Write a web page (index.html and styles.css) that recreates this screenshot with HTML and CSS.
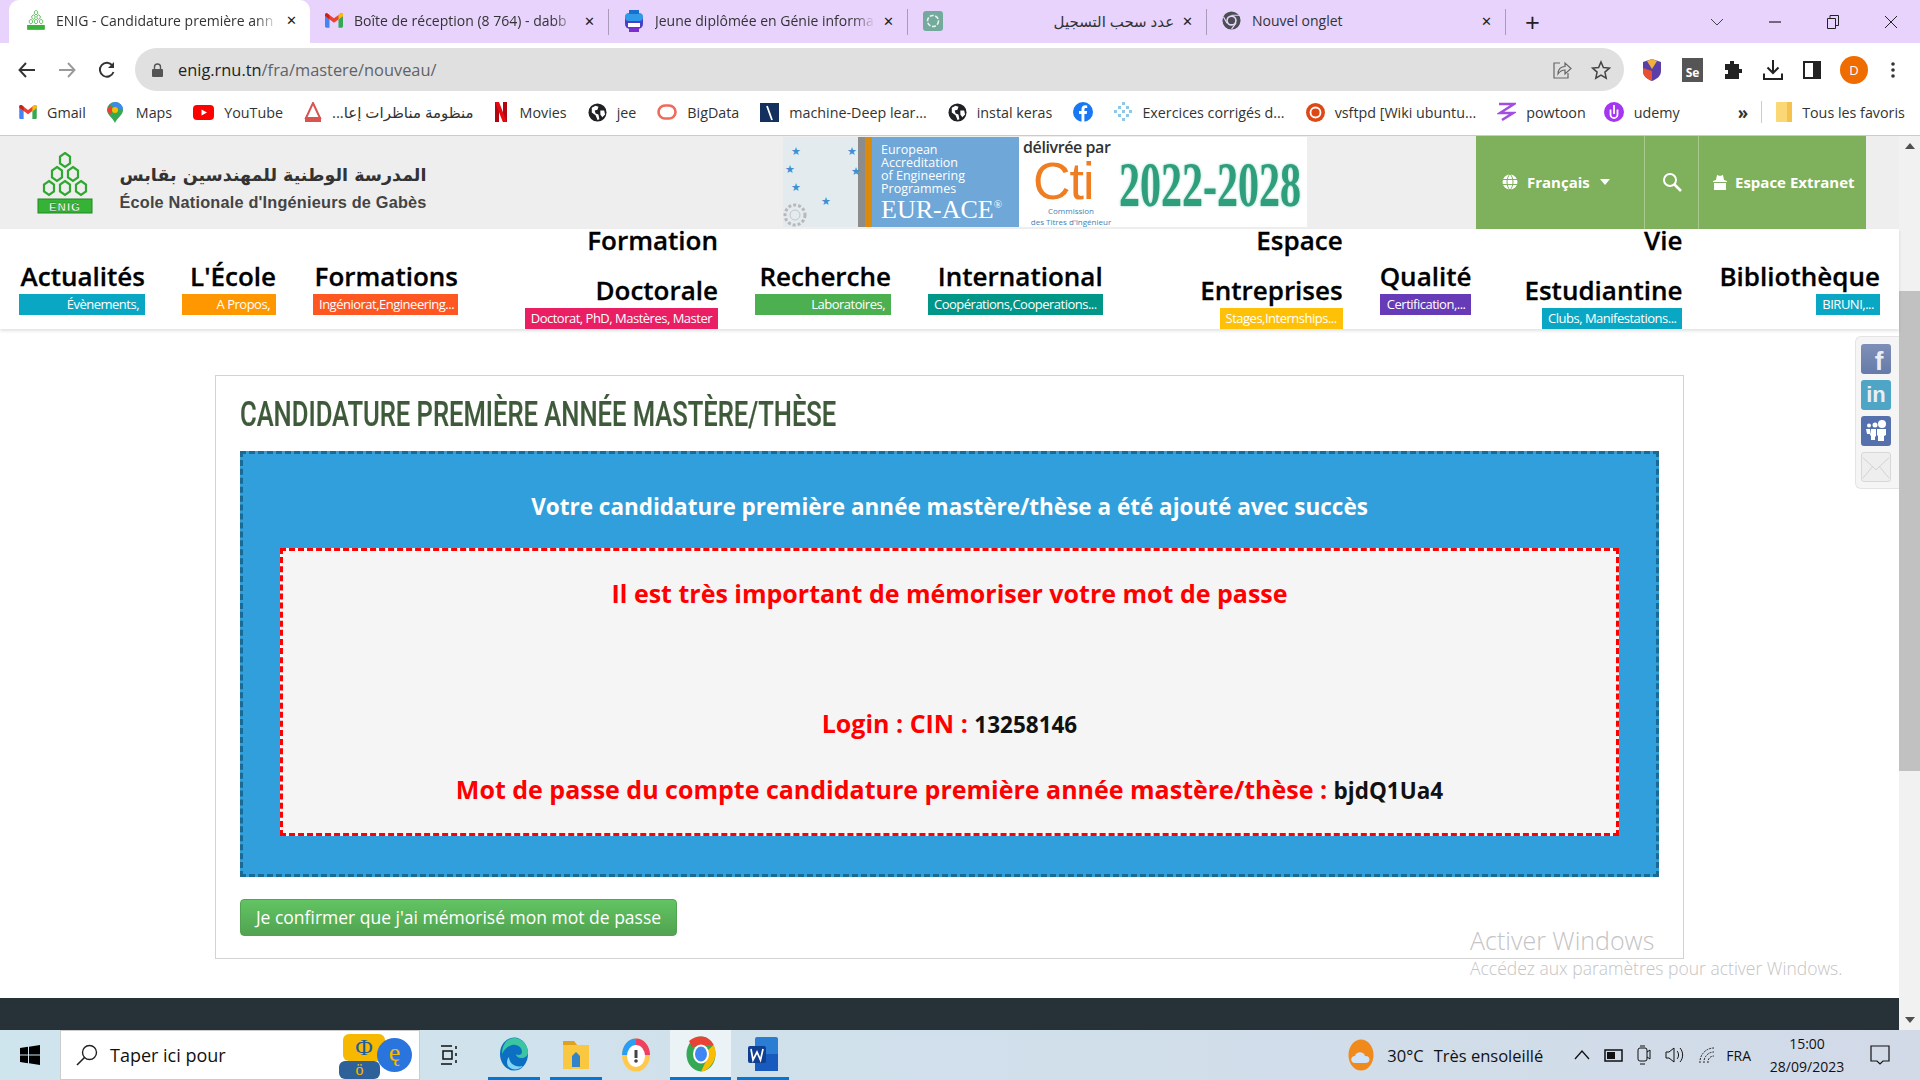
FILE: index.html
```html
<!DOCTYPE html>
<html lang="fr">
<head>
  <meta charset="UTF-8">
  <title>ENIG - Candidature première année mastère/thèse</title>
  <link rel="stylesheet" href="styles.css">
</head>
<body>
  <svg class="defs" width="0" height="0">
    <symbol id="gmail" viewBox="0 0 20 16">
      <path fill="#4285f4" d="M0 3v11.500c0 .8.700 1.500 1.500 1.500H5V7z"/>
      <path fill="#34a853" d="M15 7v9h3.500c.8 0 1.500-.7 1.500-1.500V3z"/>
      <path fill="#ea4335" d="M0 3l10 7.500L20 3v-1C20 .2 18.300-.5 17 .4L10 5.600 3 .4C1.700-.5 0 .2 0 2z"/>
      <path fill="#fbbc04" d="M15 7l5-4v-1c0-1.800-1.700-2.500-3-1.600L15 2z"/>
      <path fill="#c5221f" d="M0 3l5 4V2L3 .4C1.700-.5 0 .2 0 2z"/>
    </symbol>
    <symbol id="globe" viewBox="0 0 20 20">
      <circle cx="10" cy="10" r="9.500" fill="#202124"/>
      <path fill="#fff" d="M4 5l4-2 3 1-1 3-3 1 1 3 3 1 1 5-2 1-2-5-4-3zM13 8l4 0 1 4-3 3-2-3z"/>
    </symbol>
    <symbol id="enig" viewBox="0 0 56 62">
      <g fill="none" stroke="#2fa82f" stroke-width="2.200">
        <path d="M28 1l5 3.500v7L28 15l-5-3.500v-7z"/>
        <path d="M20 15l5 3.500v7L20 29l-5-3.500v-7z"/>
        <path d="M36 15l5 3.500v7L36 29l-5-3.500v-7z"/>
        <path d="M12 29l5 3.500v7L12 43l-5-3.500v-7z"/>
        <path d="M28 29l5 3.500v7L28 43l-5-3.500v-7z"/>
        <path d="M44 29l5 3.500v7L44 43l-5-3.500v-7z"/>
      </g>
      <rect x="1" y="47" width="54" height="14" fill="#36b336" stroke="#1d8a1d"/>
    </symbol>
  </svg>

  <div class="tabstrip">
    <div class="tab tab-active">
      <svg class="fav" width="18" height="20"><use href="#enig"/></svg>
      <span class="tab-title">ENIG - Candidature première ann</span>
      <span class="tab-close">✕</span>
    </div>
    <div class="tab">
      <svg class="fav" width="18" height="15"><use href="#gmail"/></svg>
      <span class="tab-title">Boîte de réception (8 764) - dabb</span>
      <span class="tab-close">✕</span>
    </div>
    <div class="tab">
      <svg class="fav" width="20" height="22" viewBox="0 0 20 22">
        <rect x="1" y="3" width="18" height="16" rx="5" fill="#4a3fc9"/>
        <rect x="1" y="3" width="18" height="8" rx="4" fill="#2f9be8"/>
        <rect x="5" y="0" width="10" height="4" fill="#1c6dd0"/>
        <rect x="5" y="18" width="10" height="4" fill="#7a2fd0"/>
        <rect x="4" y="13" width="12" height="4" fill="#fff"/>
      </svg>
      <span class="tab-title">Jeune diplômée en Génie informa</span>
      <span class="tab-close">✕</span>
    </div>
    <div class="tab">
      <svg class="fav" width="20" height="20" viewBox="0 0 20 20">
        <rect width="20" height="20" rx="3" fill="#74aa9c"/>
        <circle cx="10" cy="10" r="5.500" fill="none" stroke="#e6f2ef" stroke-width="1.600" stroke-dasharray="4 1.500"/>
      </svg>
      <span class="tab-title tab-rtl" dir="rtl">عدد سحب التسجيل</span>
      <span class="tab-close">✕</span>
    </div>
    <div class="tab tab-last">
      <svg class="fav" width="19" height="19" viewBox="0 0 20 20">
        <circle cx="10" cy="10" r="9.500" fill="#4a4d52"/>
        <circle cx="10" cy="10" r="5.500" fill="#e8d3fd"/>
        <circle cx="10" cy="10" r="3.800" fill="#4a4d52"/>
        <path d="M10 4.500h8.500M5.200 12.800L1.500 6M14.800 12.800L10 19" stroke="#e8d3fd" stroke-width="1.200"/>
      </svg>
      <span class="tab-title">Nouvel onglet</span>
      <span class="tab-close">✕</span>
    </div>
    <span class="new-tab">+</span>
    <div class="win-controls">
      <svg width="14" height="8" viewBox="0 0 14 8"><path d="M1 1l6 6 6-6" fill="none" stroke="#444"/></svg>
      <svg width="14" height="2" viewBox="0 0 14 2"><path d="M1 1h12" stroke="#222" stroke-width="1.200"/></svg>
      <svg width="14" height="14" viewBox="0 0 14 14"><path d="M1.500 3.500h8v10h-8zM4 3.500V.5h8.500v10H9.500" fill="none" stroke="#222"/></svg>
      <svg width="14" height="14" viewBox="0 0 14 14"><path d="M1 1l12 12M13 1L1 13" stroke="#222"/></svg>
    </div>
  </div>

  <div class="toolbar">
    <svg class="nav-ic" width="18" height="16" viewBox="0 0 18 16"><path d="M17 8H2M8 1L1.500 8 8 15" fill="none" stroke="#333" stroke-width="1.900"/></svg>
    <svg class="nav-ic" width="18" height="16" viewBox="0 0 18 16"><path d="M1 8h15M10 1l6.500 7L10 15" fill="none" stroke="#9a9a9a" stroke-width="1.900"/></svg>
    <svg class="nav-ic" width="18" height="18" viewBox="0 0 18 18"><path d="M15.500 11a7 7 0 1 1-1-6.500" fill="none" stroke="#333" stroke-width="1.900"/><path d="M16 1v6h-6z" fill="#333"/></svg>
    <div class="omnibox">
      <svg width="11" height="14" viewBox="0 0 11 14"><path d="M2.500 6V4a3 3 0 0 1 6 0v2" fill="none" stroke="#555" stroke-width="1.400"/><rect y="6" width="11" height="8" rx="1" fill="#555"/></svg>
      <span class="url"><b>enig.rnu.tn</b>/fra/mastere/nouveau/</span>
      <svg class="omni-share" width="20" height="20" viewBox="0 0 20 20"><path d="M8 3H2v15h14v-5" fill="none" stroke="#666" stroke-width="1.200"/><path d="M6 14c0-5 3-7.500 7-7.500V3l6 5.500-6 5.500v-4c-3 0-5 1-7 4z" fill="none" stroke="#666" stroke-width="1.200"/></svg>
      <svg width="20" height="20" viewBox="0 0 20 20"><path d="M10 2l2.400 5.500 6 .6-4.500 4 1.300 6L10 15l-5.200 3.100 1.300-6-4.500-4 6-.6z" fill="none" stroke="#444" stroke-width="1.500"/></svg>
    </div>
    <div class="ext-icons">
      <svg width="20" height="24" viewBox="0 0 20 24"><path d="M10 1l9 3v9c0 5-4 8-9 10-5-2-9-5-9-10V4z" fill="#5b3fa8"/><path d="M1 10l9 3v10c-5-2-9-5-9-10z" fill="#e8502f"/><path d="M10 1l5 2-5 8-5-8z" fill="#f3b13a"/></svg>
      <span class="ext-se">Se</span>
      <svg width="20" height="20" viewBox="0 0 20 20"><path fill="#222" d="M7 1h4v3h5v5h3v4h-3v6H2v-5h3v-4H2V4h5z"/></svg>
      <svg width="20" height="20" viewBox="0 0 20 20"><path d="M10 0v12M4.500 7.500L10 13l5.500-5.500M1 13.500V19h18v-5.500" fill="none" stroke="#222" stroke-width="2"/></svg>
      <svg width="18" height="18" viewBox="0 0 18 18"><rect x="1" y="1" width="16" height="16" fill="none" stroke="#222" stroke-width="2"/><rect x="10" y="1" width="7" height="16" fill="#222"/></svg>
      <span class="avatar">D</span>
      <svg class="ext-dots" width="4" height="16" viewBox="0 0 4 16"><circle cx="2" cy="2" r="1.800" fill="#333"/><circle cx="2" cy="8" r="1.800" fill="#333"/><circle cx="2" cy="14" r="1.800" fill="#333"/></svg>
    </div>
  </div>

  <div class="bookmarks">
    <span class="bm"><svg width="18" height="14"><use href="#gmail"/></svg>Gmail</span>
    <span class="bm bm-wide"><svg width="16" height="21" viewBox="0 0 16 21"><path d="M8 0a8 8 0 0 1 8 8c0 5-6 8-8 13C6 16 0 13 0 8a8 8 0 0 1 8-8z" fill="#34a853"/><path d="M8 0a8 8 0 0 1 8 8L3 3a8 8 0 0 1 5-3z" fill="#4285f4"/><path d="M3 3L0 8l3 5 3-5z" fill="#ea4335"/><circle cx="8" cy="8" r="3" fill="#fbbc04"/></svg>Maps</span>
    <span class="bm"><svg width="21" height="15" viewBox="0 0 21 15"><rect width="21" height="15" rx="4" fill="#f00"/><path d="M8.500 4.500l5.500 3-5.500 3z" fill="#fff"/></svg>YouTube</span>
    <span class="bm bm-ar"><svg width="18" height="20" viewBox="0 0 18 20"><path d="M9 1l7 15H2z" fill="none" stroke="#d9534f" stroke-width="2"/><rect x="1" y="15" width="16" height="5" fill="#d9534f"/></svg><span dir="rtl">منظومة مناظرات إعا...</span></span>
    <span class="bm bm-wide"><svg width="12" height="20" viewBox="0 0 12 20"><path d="M0 0h4v20l-4 .5z" fill="#b1060f"/><path d="M8 0h4v20.500L8 20z" fill="#b1060f"/><path d="M0 0h4l8 20.500H8z" fill="#e50914"/></svg>Movies</span>
    <span class="bm"><svg width="19" height="19"><use href="#globe"/></svg>jee</span>
    <span class="bm"><svg width="20" height="16" viewBox="0 0 20 16"><rect x="1.500" y="1.500" width="17" height="13" rx="6.500" fill="none" stroke="#ef6a5a" stroke-width="2.600"/></svg>BigData</span>
    <span class="bm"><svg width="19" height="19" viewBox="0 0 19 19"><rect width="19" height="19" fill="#14305f"/><path d="M7 3l5 14" stroke="#fff" stroke-width="1.800"/></svg>machine-Deep lear...</span>
    <span class="bm"><svg width="19" height="19"><use href="#globe"/></svg>instal keras</span>
    <span class="bm"><svg width="20" height="20" viewBox="0 0 20 20"><circle cx="10" cy="10" r="10" fill="#1877f2"/><path d="M8.500 20v-8H6V9h2.500V7c0-2.500 1.500-3.800 3.700-3.800l2 .2v2.500h-1.300c-1.200 0-1.500.7-1.500 1.500V9h2.700l-.4 3h-2.300v8z" fill="#fff"/></svg></span>
    <span class="bm"><svg width="18" height="20" viewBox="0 0 18 20"><g fill="#8fc7e8"><rect x="8" y="0" width="3" height="3"/><rect x="4" y="4" width="3" height="3"/><rect x="12" y="4" width="3" height="3"/><rect x="0" y="8" width="3" height="3"/><rect x="8" y="8" width="3" height="3"/><rect x="15" y="8" width="3" height="3"/><rect x="4" y="12" width="3" height="3"/><rect x="12" y="12" width="3" height="3"/><rect x="8" y="16" width="3" height="3"/></g></svg>Exercices corrigés d...</span>
    <span class="bm"><svg width="19" height="19" viewBox="0 0 19 19"><circle cx="9.500" cy="9.500" r="9.500" fill="#dd4814"/><circle cx="9.500" cy="9.500" r="5" fill="none" stroke="#fff" stroke-width="1.800"/></svg>vsftpd [Wiki ubuntu...</span>
    <span class="bm"><svg width="19" height="20" viewBox="0 0 19 20"><path d="M2 2h15L3 11h13L5 18" fill="none" stroke="#a04fe0" stroke-width="2.600"/></svg>powtoon</span>
    <span class="bm bm-udemy"><svg width="20" height="20" viewBox="0 0 20 20"><circle cx="10" cy="10" r="10" fill="#a435f0"/><path d="M6.500 7.500v5a3.500 3.500 0 0 0 7 0v-5M10 3v9" fill="none" stroke="#fff" stroke-width="1.800"/></svg>udemy</span>
    <span class="bm-more">»</span>
    <span class="bm-sep"></span>
    <span class="bm bm-all"><svg width="16" height="20" viewBox="0 0 16 20"><rect width="16" height="20" rx="1" fill="#fbd775"/><path d="M11 0h5v20h-5z" fill="#f4c24d"/></svg>Tous les favoris</span>
  </div>

  <div class="viewport">
    <div class="page">
      <header class="site-header">
        <div class="brand">
          <svg class="brand-logo" width="56" height="62" viewBox="0 0 56 62">
            <use href="#enig" width="56" height="62"/>
            <text x="28" y="58.500" font-family="Liberation Sans" font-size="11.500" font-weight="700" fill="#fff" stroke="#0c5c0c" stroke-width=".3" text-anchor="middle" letter-spacing="1">ENIG</text>
          </svg>
          <div class="brand-names">
            <div class="brand-ar" dir="rtl">المدرسة الوطنية للمهندسين بقابس</div>
            <div class="brand-fr">École Nationale d'Ingénieurs de Gabès</div>
          </div>
        </div>
        <div class="accred">
          <div class="accred-stars">
            <span class="star s1">★</span><span class="star s2">★</span><span class="star s3">★</span>
            <span class="star s4">★</span><span class="star s5">★</span><span class="star s6">★</span>
            <svg class="accred-gear" width="34" height="34" viewBox="0 0 34 34"><circle cx="12" cy="22" r="10" fill="none" stroke="#b8b8b8" stroke-width="3" stroke-dasharray="3 2"/><circle cx="12" cy="22" r="5" fill="none" stroke="#c4c4c4"/></svg>
          </div>
          <div class="accred-blue">
            <div class="accred-lines">European<br>Accreditation<br>of Engineering<br>Programmes</div>
            <div class="accred-eur">EUR-ACE<sup>®</sup></div>
          </div>
          <div class="accred-cti">
            <div class="cti-by">délivrée par</div>
            <div class="cti-logo">Cti</div>
            <div class="cti-sub">Commission<br>des Titres d'Ingénieur</div>
          </div>
          <div class="accred-years"><span>2022-2028</span></div>
        </div>
        <div class="header-actions">
          <div class="act act-lang">
            <svg width="16" height="16" viewBox="0 0 16 16"><circle cx="8" cy="8" r="7.500" fill="#fff"/><path d="M0 5.500h16M0 10.500h16M8 0c-4 4-4 12 0 16M8 0c4 4 4 12 0 16" fill="none" stroke="#7fb05b"/></svg>
            <span>Français</span>
            <span class="caret"></span>
          </div>
          <div class="act act-search">
            <svg width="20" height="20" viewBox="0 0 20 20"><circle cx="8" cy="8" r="6" fill="none" stroke="#fff" stroke-width="2"/><path d="M12.500 12.500L19 19" stroke="#fff" stroke-width="2.600"/></svg>
          </div>
          <div class="act act-extra">
            <svg width="14" height="16" viewBox="0 0 14 16"><path fill="#fff" d="M3 6l1-5 3 1 3-1 1 5 3 1v1H0V7zM1 9h12v7H1z"/></svg>
            <span>Espace Extranet</span>
          </div>
        </div>
      </header>

      <nav class="main-nav">
        <div class="nav-item nav-act"><div class="nav-title">Actualités</div><div class="nav-label c-cyan">Évènements,</div></div>
        <div class="nav-item nav-ecole"><div class="nav-title">L'École</div><div class="nav-label c-orange">A Propos,</div></div>
        <div class="nav-item nav-form"><div class="nav-title">Formations</div><div class="nav-label c-deep">Ingéniorat,Engineering...</div></div>
        <div class="nav-item nav-tall nav-doc"><div class="nav-title">Formation<br>Doctorale</div><div class="nav-label c-pink">Doctorat, PhD, Mastères, Master</div></div>
        <div class="nav-item nav-rech"><div class="nav-title">Recherche</div><div class="nav-label c-green">Laboratoires,</div></div>
        <div class="nav-item"><div class="nav-title">International</div><div class="nav-label c-teal">Coopérations,Cooperations...</div></div>
        <div class="nav-item nav-tall nav-esp"><div class="nav-title">Espace<br>Entreprises</div><div class="nav-label c-amber">Stages,Internships...</div></div>
        <div class="nav-item"><div class="nav-title">Qualité</div><div class="nav-label c-purple">Certification,...</div></div>
        <div class="nav-item nav-tall nav-vie"><div class="nav-title">Vie<br>Estudiantine</div><div class="nav-label c-cyan">Clubs, Manifestations...</div></div>
        <div class="nav-item nav-lib"><div class="nav-title">Bibliothèque</div><div class="nav-label c-cyan">BIRUNI,...</div></div>
      </nav>

      <main class="panel">
        <h1 class="panel-title">CANDIDATURE PREMIÈRE ANNÉE MASTÈRE/THÈSE</h1>
        <div class="notice">
          <p class="notice-head">Votre candidature première année mastère/thèse a été ajouté avec succès</p>
          <div class="creds">
            <p class="creds-warn">Il est très important de mémoriser votre mot de passe</p>
            <p class="creds-login">Login : CIN : <b>13258146</b></p>
            <p class="creds-pass">Mot de passe du compte candidature première année mastère/thèse : <b>bjdQ1Ua4</b></p>
          </div>
        </div>
        <button class="confirm-btn">Je confirmer que j'ai mémorisé mon mot de passe</button>
      </main>

      <footer class="site-footer"></footer>

      <div class="social">
        <span class="soc soc-fb">f</span>
        <span class="soc soc-in">in</span>
        <span class="soc soc-ms">
          <svg width="24" height="22" viewBox="0 0 24 22"><g fill="#fff"><circle cx="18" cy="4" r="4"/><circle cx="11" cy="5" r="2.500"/><circle cx="5" cy="5.500" r="2"/><path d="M13 9h9v6l-2 1v5h-6v-5l-1-1zM7 9h5v7l-1 1v3H7v-4l-1-1zM2 9h4v5H3z"/></g></svg>
        </span>
        <span class="soc soc-mail">
          <svg width="30" height="30" viewBox="0 0 30 30"><path d="M1 5l14 13L29 5M1 27l10-12M29 27L19 15" fill="none" stroke="#d0d0d0"/></svg>
        </span>
      </div>

      <div class="activate">
        <div class="activate-a">Activer Windows</div>
        <div class="activate-b">Accédez aux paramètres pour activer Windows.</div>
      </div>
    </div>

    <div class="scrollbar">
      <span class="sb-up"></span>
      <span class="sb-thumb"></span>
      <span class="sb-down"></span>
    </div>
  </div>

  <div class="taskbar">
    <svg class="start" width="20" height="20" viewBox="0 0 20 20"><path fill="#000" d="M0 3l8-1.200V9.500H0zM9 1.700L20 0v9.500H9zM0 10.500h8v7.700L0 17zM9 10.500h11V20L9 18.300z"/></svg>
    <div class="search-box">
      <svg width="22" height="22" viewBox="0 0 22 22"><circle cx="13.500" cy="8.500" r="7" fill="none" stroke="#222" stroke-width="1.400"/><path d="M8.500 13.500L1 21" stroke="#222" stroke-width="1.600"/></svg>
      <span>Taper ici pour</span>
      <span class="bubbles">
        <span class="bub bub-a">Φ</span>
        <span class="bub bub-b">ę</span>
        <span class="bub bub-c">ö</span>
      </span>
    </div>
    <svg class="task-view" width="20" height="20" viewBox="0 0 20 20"><path d="M1 1h11M1 19h11M3 6h9v8H3zM16 1v3M16 8v3M16 15v3" fill="none" stroke="#111" stroke-width="1.500"/></svg>
    <span class="tile tile-on">
      <svg width="30" height="34" viewBox="0 0 30 34"><ellipse cx="15" cy="17" rx="14" ry="16.500" fill="#0c6fc2"/><path d="M15 1c8 0 14 7 14 14 0 4-3 6-7 6-3 0-5-2-5-4 2 2 6 1 6-2 0-5-5-8-10-7C9 9 5 12 3 17 3 8 8 1 15 1z" fill="#39c6a0"/><path d="M10 20c0 6 6 11 14 9-3 3-7 4-11 3-6-2-6-9-3-12z" fill="#7fd3f5"/></svg>
    </span>
    <span class="tile tile-on">
      <svg width="28" height="30" viewBox="0 0 28 30"><path d="M1 2h11l3 4h12v24H1z" fill="#f9c840"/><path d="M1 2h11l3 4H1z" fill="#e0a020"/><path d="M10 28V17l4-4 4 4v11z" fill="#3383c9"/></svg>
    </span>
    <span class="tile tile-brave">
      <svg width="30" height="34" viewBox="0 0 30 34"><ellipse cx="15" cy="17" rx="14" ry="16.500" fill="#ffc94d"/><path d="M15 .5C23 .5 29 8 29 17H15z" fill="#ee4060"/><path d="M1 17C1 8 7 .5 15 .5V17z" fill="#2a9df4"/><ellipse cx="15" cy="18" rx="9" ry="11" fill="#fff"/><rect x="13.500" y="12" width="3" height="8" fill="#444"/><circle cx="15" cy="23" r="1.800" fill="#444"/></svg>
    </span>
    <span class="tile tile-on tile-active">
      <svg width="30" height="36" viewBox="0 0 30 36"><ellipse cx="15" cy="18" rx="14.500" ry="17.500" fill="#34a853"/><path d="M15 .5c5.500 0 10 3 12.700 8.500H15l-9 2-3-6C6 2.500 10 .5 15 .5z" fill="#ea4335"/><path d="M27.700 9c2.500 5.500 2.200 13-1 18S19 35.500 15 35.500L21 23l1-9z" fill="#fbbc04"/><ellipse cx="15" cy="18" rx="8" ry="9.500" fill="#fff"/><ellipse cx="15" cy="18" rx="6" ry="7.500" fill="#4285f4"/></svg>
    </span>
    <span class="tile tile-on tile-word">
      <svg width="30" height="34" viewBox="0 0 30 34"><rect x="7" y="0" width="23" height="34" rx="2" fill="#2b7cd3"/><rect x="7" y="17" width="23" height="17" fill="#185abd"/><rect x="0" y="9" width="18" height="17" rx="2" fill="#103f91"/><path d="M3 12l2 11 4-8 3.500 8L15 12" fill="none" stroke="#fff" stroke-width="1.700"/></svg>
    </span>

    <div class="tray">
      <svg width="26" height="32" viewBox="0 0 26 32"><ellipse cx="13" cy="16" rx="12.500" ry="15.500" fill="#f08a1d"/><path d="M7 24c-5 0-5-7 0-7 1-5 9-5 10 0 5-1 7 7 0 7z" fill="#cfe3fa"/></svg>
      <span class="tray-temp">30°C</span>
      <span class="tray-sky">Très ensoleillé</span>
      <svg class="tray-up" width="16" height="10" viewBox="0 0 16 10"><path d="M1 9l7-8 7 8" fill="none" stroke="#111" stroke-width="1.300"/></svg>
      <svg width="19" height="13" viewBox="0 0 19 13"><rect x="1" y="1" width="17" height="11" fill="none" stroke="#111" stroke-width="1.500"/><rect x="3" y="3" width="8" height="7" fill="#111"/></svg>
      <svg width="14" height="20" viewBox="0 0 14 20"><rect x="1" y="3" width="9" height="13" rx="2" fill="none" stroke="#111"/><path d="M3 1h5M3 19h5M10 7l3-2v9l-3-2" fill="none" stroke="#111"/></svg>
      <svg width="20" height="18" viewBox="0 0 20 18"><path d="M1 6h3l5-4v14l-5-4H1zM12 5c2 2 2 6 0 8M15 2c3.500 4 3.500 10 0 14" fill="none" stroke="#111"/></svg>
      <svg width="18" height="18" viewBox="0 0 18 18"><path d="M1 17A14 14 0 0 1 15 2M5 17A10 10 0 0 1 15 6M9 17a6 6 0 0 1 6-7" fill="none" stroke="#222" stroke-dasharray="2 1"/></svg>
      <span class="tray-lang">FRA</span>
      <span class="clock">15:00<br>28/09/2023</span>
      <svg class="tray-note" width="20" height="20" viewBox="0 0 20 20"><path d="M1 1h18v15h-6l-3 3-3-3H1z" fill="none" stroke="#111" stroke-width="1.200"/></svg>
    </div>
  </div>
</body>
</html>
```

FILE: styles.css
```css
/* window */
* {
  box-sizing: border-box;
}

html, body {
  height: 100%;
}

body {
  display: flex;
  flex-direction: column;
  width: 1920px;
  height: 1080px;
  margin: 0;
  overflow: hidden;
  font-family: "Open Sans", "DejaVu Sans", sans-serif;
  color: #000;
  background-color: #fff;
}

.defs {
  position: absolute;
}

p, h1 {
  margin: 0;
}

/* tabs */
.tabstrip {
  display: flex;
  align-items: flex-end;
  flex: 0 0 43px;
  padding-left: 9px;
  background-color: #e8d3fd;
}

.tab {
  display: flex;
  align-items: center;
  width: 299px;
  height: 26px;
  margin-bottom: 8px;
  padding: 0 13px 3px 15px;
  font-size: 14px;
  color: #333;
  border-right: 1px solid #a99cb8;
}

.tab-active {
  width: 301px;
  height: 43px;
  margin-bottom: 0;
  padding-left: 18px;
  padding-bottom: 3px;
  border-right: none;
  border-radius: 10px 10px 0 0;
  background-color: #fff;
}

.fav {
  flex: none;
  margin-right: 11px;
}

.tab-title {
  flex: 1;
  overflow: hidden;
  white-space: nowrap;
  -webkit-mask-image: linear-gradient(to right, #000 90%, transparent);
  mask-image: linear-gradient(to right, #000 90%, transparent);
}

.tab-rtl {
  font-size: 15px;
  -webkit-mask-image: none;
  mask-image: none;
}

.tab-last .tab-title {
  -webkit-mask-image: none;
  mask-image: none;
}

.tab-close {
  flex: none;
  margin-left: 8px;
  font-size: 13px;
  font-weight: 700;
  color: #222;
}

.new-tab {
  align-self: center;
  margin-left: 19px;
  font-size: 26px;
  line-height: 30px;
  color: #222;
}

.win-controls {
  display: flex;
  align-items: center;
  gap: 44px;
  align-self: center;
  margin-left: auto;
  padding-right: 22px;
}

/* toolbar */
.toolbar {
  display: flex;
  align-items: center;
  flex: 0 0 49px;
  padding: 4px 0 0 18px;
}

.nav-ic {
  margin-right: 22px;
}

.omnibox {
  display: flex;
  align-items: center;
  gap: 19px;
  width: 1489px;
  height: 43px;
  margin-left: -3px;
  padding: 0 13px 0 17px;
  border-radius: 22px;
  background-color: #e0e0e0;
}

.url {
  flex: 1;
  margin-left: -4px;
  font-size: 16.400px;
  color: #5f6368;
}

.url b {
  font-weight: 400;
  color: #222;
}

.ext-icons {
  display: flex;
  align-items: center;
  gap: 20px;
  margin-left: 18px;
}

.ext-se {
  display: block;
  width: 21px;
  height: 24px;
  padding-top: 7px;
  font-size: 12px;
  font-weight: 700;
  line-height: 15px;
  text-align: center;
  color: #fff;
  background-color: #555;
}

.avatar {
  width: 28px;
  height: 28px;
  margin-left: -1px;
  font-size: 13px;
  line-height: 28px;
  text-align: center;
  color: #fff;
  border-radius: 50%;
  background-color: #ef6c00;
}

.ext-dots {
  margin-left: 3px;
}

/* bookmarks */
.bookmarks {
  display: flex;
  align-items: center;
  gap: 21px;
  flex: 0 0 44px;
  padding: 0 0 3px 19px;
  font-size: 14.300px;
  color: #333;
  border-bottom: 1px solid #ccc;
}

.bm {
  display: flex;
  align-items: center;
  gap: 10px;
  white-space: nowrap;
}

.bm-wide {
  gap: 13px;
}

.bm-udemy {
  margin-left: -3px;
}

.bm-ar span {
  font-size: 15px;
}

.bm-more {
  margin-left: 37px;
  font-size: 17px;
  font-weight: 700;
}

.bm-sep {
  width: 1px;
  height: 22px;
  margin-left: -8px;
  background-color: #ccc;
}

.bm-all {
  margin-left: -7px;
}

/* page */
.viewport {
  display: flex;
  flex: 1;
  min-height: 0;
}

.page {
  position: relative;
  display: flex;
  flex-direction: column;
  flex: 1;
  min-width: 0;
}

.site-header {
  display: flex;
  flex: 0 0 93px;
  background-color: #eee;
}

.brand {
  display: flex;
  align-items: center;
  width: 783px;
  padding-left: 37px;
}

.brand-names {
  width: 310px;
  margin-top: 8px;
  margin-left: 25px;
  text-align: center;
  white-space: nowrap;
  color: #333;
}

.brand-ar {
  font-family: "DejaVu Sans", sans-serif;
  font-size: 17.500px;
  font-weight: 700;
  line-height: 30px;
}

.brand-fr {
  font-family: "Liberation Sans", sans-serif;
  font-size: 16.300px;
  font-weight: 700;
  line-height: 24px;
  letter-spacing: .2px;
  color: #444;
}

/* accreditation banner */
.accred {
  display: flex;
  align-items: stretch;
  flex: none;
  width: 524px;
  height: 90px;
  margin-top: 1px;
  background-color: #fff;
}

.accred-stars {
  position: relative;
  flex: 0 0 82px;
  background-color: #e4ebef;
  border-right: 7px solid #8c8c8c;
}

.accred-gear {
  position: absolute;
  left: 0;
  bottom: 0;
}

.star {
  position: absolute;
  font-size: 11px;
  line-height: 11px;
  color: #3f8fd2;
}

.s1 { left: 8px; top: 8px; }
.s2 { left: 64px; top: 8px; }
.s3 { left: 2px; top: 26px; }
.s4 { left: 68px; top: 28px; }
.s5 { left: 8px; top: 44px; }
.s6 { left: 38px; top: 58px; }

.accred-blue {
  flex: 0 0 154px;
  padding: 6px 0 0 9px;
  color: #fff;
  background-color: #6ea7d8;
  border-left: 7px solid #dc8a0c;
}

.accred-lines {
  font-size: 12.500px;
  line-height: 13px;
}

.accred-eur {
  font-family: "Liberation Serif", serif;
  font-size: 26px;
  line-height: 30px;
}

.accred-eur sup {
  font-size: 11px;
  line-height: 0;
}

.accred-cti {
  flex: 0 0 100px;
  padding-left: 4px;
  overflow: hidden;
  white-space: nowrap;
}

.cti-by {
  font-size: 16px;
  font-weight: 600;
  letter-spacing: -.4px;
  line-height: 20px;
  color: #333;
}

.cti-logo {
  padding-left: 10px;
  font-family: "Liberation Sans", sans-serif;
  font-size: 52px;
  line-height: 48px;
  letter-spacing: -1px;
  color: #ef7d22;
}

.cti-sub {
  font-size: 8px;
  line-height: 11px;
  text-align: center;
  color: #3f7fb5;
}

.accred-years {
  display: flex;
  align-items: center;
  flex: 1;
  padding-top: 6px;
  font-family: "Liberation Serif", serif;
  font-size: 42px;
  font-weight: 700;
  color: #2f9e7d;
}

.accred-years span {
  transform: scaleY(1.5);
  white-space: nowrap;
  text-shadow: 0 0 2px #7cc7ae;
}

/* green actions */
.header-actions {
  display: flex;
  flex: none;
  width: 390px;
  margin-left: auto;
  margin-right: 33px;
  font-size: 15px;
  font-weight: 700;
  color: #fff;
  background-color: #7fb05b;
}

.act {
  display: flex;
  align-items: center;
  padding-bottom: 2px;
  white-space: nowrap;
}

.act-lang {
  flex: 0 0 168px;
  gap: 9px;
  padding-left: 26px;
}

.act-search {
  flex: 0 0 55px;
  justify-content: center;
  border-left: 1px solid #a9c98f;
  border-right: 1px solid #a9c98f;
}

.act-extra {
  flex: 1;
  gap: 8px;
  padding-left: 14px;
}

.caret {
  width: 0;
  height: 0;
  margin-left: 1px;
  border-left: 5px solid transparent;
  border-right: 5px solid transparent;
  border-top: 6px solid #fff;
}

/* menu */
.main-nav {
  display: flex;
  align-items: flex-end;
  gap: 37px;
  flex: 0 0 100px;
  min-height: 0;
  height: 100px;
  padding-left: 19px;
  background-color: #fff;
  box-shadow: 0 2px 3px rgba(0, 0, 0, .12);
}

.nav-item {
  flex: none;
  padding-bottom: 14px;
  text-align: right;
  white-space: nowrap;
}

.nav-tall {
  padding-bottom: 0;
}

.nav-act {
  width: 126px;
}

.nav-ecole {
  width: 94px;
}

.nav-form {
  width: 145px;
}

.nav-doc {
  width: 223px;
}

.nav-rech {
  width: 136px;
}

.nav-esp {
  width: 203px;
}

.nav-vie {
  width: 174px;
}

.nav-title {
  font-size: 26px;
  font-weight: 600;
  line-height: 50px;
  color: #000;
  -webkit-text-stroke: .3px #000;
}

.nav-label {
  height: 21px;
  margin-top: -7px;
  padding: 0 6px;
  font-size: 13px;
  line-height: 21px;
  letter-spacing: -.5px;
  color: #fff;
}

.nav-doc .nav-label,
.nav-esp .nav-label,
.nav-vie .nav-label,
.nav-lib .nav-label {
  width: fit-content;
  margin-left: auto;
}

.c-cyan { background-color: #0aa7c4; }
.c-orange { background-color: #ff9800; }
.c-deep { background-color: #ff5722; }
.c-pink { background-color: #e91e63; }
.c-green { background-color: #4caf50; }
.c-teal { background-color: #009688; }
.c-amber { background-color: #ffc107; }
.c-purple { background-color: #673ab7; }

/* candidature panel */
.panel {
  width: 1469px;
  height: 584px;
  margin: 46px 0 0 215px;
  padding: 19px 24px 0;
  border: 1px solid #d3d3d3;
}

.panel-title {
  margin-bottom: 16px;
  font-family: "Roboto", sans-serif;
  font-size: 35px;
  font-weight: 500;
  line-height: 40px;
  color: #3e5a3a;
  white-space: nowrap;
  -webkit-text-stroke: .2px #3e5a3a;
  transform: scaleX(.73);
  transform-origin: left;
}

.notice {
  padding: 37px 37px 38px;
  border: 3px dashed #1a6a94;
  background-color: #319fdb;
}

.notice-head {
  margin-bottom: 25px;
  font-size: 22.500px;
  font-weight: 700;
  line-height: 32px;
  text-align: center;
  color: #fff;
}

.creds {
  padding: 22px 0;
  font-size: 25px;
  font-weight: 700;
  line-height: 40px;
  text-align: center;
  color: #f00;
  border: 3px dashed #f00;
  background-color: #f5f5f5;
}

.creds b {
  font-size: 22.500px;
  font-weight: 700;
  color: #111;
}

.creds-login {
  margin-top: 90px;
}

.creds-pass {
  margin-top: 24px;
}

.confirm-btn {
  display: block;
  width: 437px;
  height: 37px;
  margin-top: 22px;
  padding: 0 0 2px;
  font-family: inherit;
  font-size: 17.500px;
  color: #fff;
  border: 1px solid #51a351;
  border-radius: 4px;
  background: linear-gradient(#62c462, #51a351);
}

.site-footer {
  flex: 0 0 32px;
  margin-top: auto;
  background-color: #263238;
}

/* things lying over the page */
.social {
  position: absolute;
  top: 200px;
  right: 0;
  display: flex;
  flex-direction: column;
  gap: 6px;
  width: 44px;
  height: 153px;
  padding: 7px 0 0 5px;
  border: 1px solid #e4e4e4;
  border-right: none;
  border-radius: 6px 0 0 6px;
  background-color: #f5f5f5;
}

.soc {
  display: flex;
  align-items: center;
  justify-content: center;
  flex: none;
  width: 30px;
  height: 30px;
  font-family: "Liberation Sans", sans-serif;
  font-size: 26px;
  font-weight: 700;
  color: #e8eef5;
  border-radius: 3px;
}

.soc-fb {
  padding: 4px 0 0 6px;
  background: linear-gradient(#7f90b8, #667ba8);
}

.soc-in {
  font-size: 22px;
  background-color: #4fa5c6;
}

.soc-ms {
  background-color: #5571ad;
}

.soc-mail {
  background-color: #eee;
  border: 1px solid #d8d8d8;
}

.activate {
  position: absolute;
  top: 788px;
  left: 1470px;
  color: #c4c4c4;
  white-space: nowrap;
}

.activate-a {
  font-size: 25px;
  font-weight: 300;
  line-height: 32px;
}

.activate-b {
  font-size: 17.500px;
  font-weight: 300;
  line-height: 24px;
}

/* scrollbar */
.scrollbar {
  display: flex;
  flex-direction: column;
  align-items: center;
  flex: 0 0 21px;
  background-color: #f1f1f1;
}

.sb-up,
.sb-down {
  width: 0;
  height: 0;
  border-left: 5px solid transparent;
  border-right: 5px solid transparent;
}

.sb-up {
  margin-top: 7px;
  border-bottom: 6px solid #505050;
}

.sb-thumb {
  width: 100%;
  height: 480px;
  margin-top: 142px;
  background-color: #c1c1c1;
}

.sb-down {
  margin-top: auto;
  margin-bottom: 7px;
  border-top: 6px solid #505050;
}

/* taskbar */
.taskbar {
  display: flex;
  align-items: center;
  flex: 0 0 50px;
  padding-left: 20px;
  font-size: 16.500px;
  color: #111;
  background: linear-gradient(to right, #cfe5ee, #d2dae8);
}

.start {
  flex: none;
}

.search-box {
  position: relative;
  display: flex;
  align-items: center;
  width: 360px;
  height: 50px;
  margin-left: 20px;
  padding-left: 15px;
  font-size: 18px;
  border: 1px solid #ccc;
  background-color: #fff;
}

.search-box span:first-of-type {
  margin-left: 12px;
}

.bubbles {
  position: absolute;
  top: 0;
  right: 7px;
  width: 81px;
  height: 50px;
}

.bub {
  position: absolute;
  display: block;
  font-family: "Liberation Serif", serif;
  text-align: center;
}

.bub-a {
  left: 0;
  top: 3px;
  width: 42px;
  height: 27px;
  font-size: 24px;
  line-height: 26px;
  color: #1d5e9e;
  border-radius: 6px;
  background-color: #f7b900;
}

.bub-b {
  right: 0;
  top: 7px;
  width: 35px;
  height: 34px;
  font-size: 26px;
  line-height: 30px;
  color: #f7b900;
  border-radius: 50%;
  background-color: #2a74de;
}

.bub-c {
  left: 8px;
  top: 30px;
  width: 41px;
  height: 18px;
  font-size: 16px;
  line-height: 18px;
  color: #f7b900;
  border-radius: 6px;
  background-color: #2e6199;
}

.task-view {
  flex: none;
  margin: 0 19px 0 20px;
}

.tile {
  display: flex;
  align-items: center;
  justify-content: center;
  flex: none;
  width: 52px;
  height: 50px;
  margin-left: 10px;
}

.task-view + .tile {
  margin-left: 9px;
}

.tile-brave {
  margin-left: 8px;
}

.tile-active {
  width: 61px;
  margin-left: 8px;
  background-color: rgba(255, 255, 255, .6);
}

.tile-on {
  border-bottom: 3px solid #0078d7;
}

.tile-word {
  margin-left: 6px;
}

.tray {
  display: flex;
  align-items: center;
  margin-left: auto;
  padding-right: 30px;
}

.tray-temp {
  margin-left: 13px;
}

.tray-sky {
  margin: 0 31px 0 10px;
}

.tray svg {
  flex: none;
}

.tray-up + svg,
.tray-up + svg + svg,
.tray-up + svg + svg + svg,
.tray-up + svg + svg + svg + svg {
  margin-left: 14px;
}

.tray-lang {
  margin-left: 9px;
  font-size: 14px;
}

.clock {
  width: 90px;
  margin-left: 11px;
  font-size: 14px;
  line-height: 23px;
  text-align: center;
}

.tray-note {
  margin-left: 18px;
}
```
